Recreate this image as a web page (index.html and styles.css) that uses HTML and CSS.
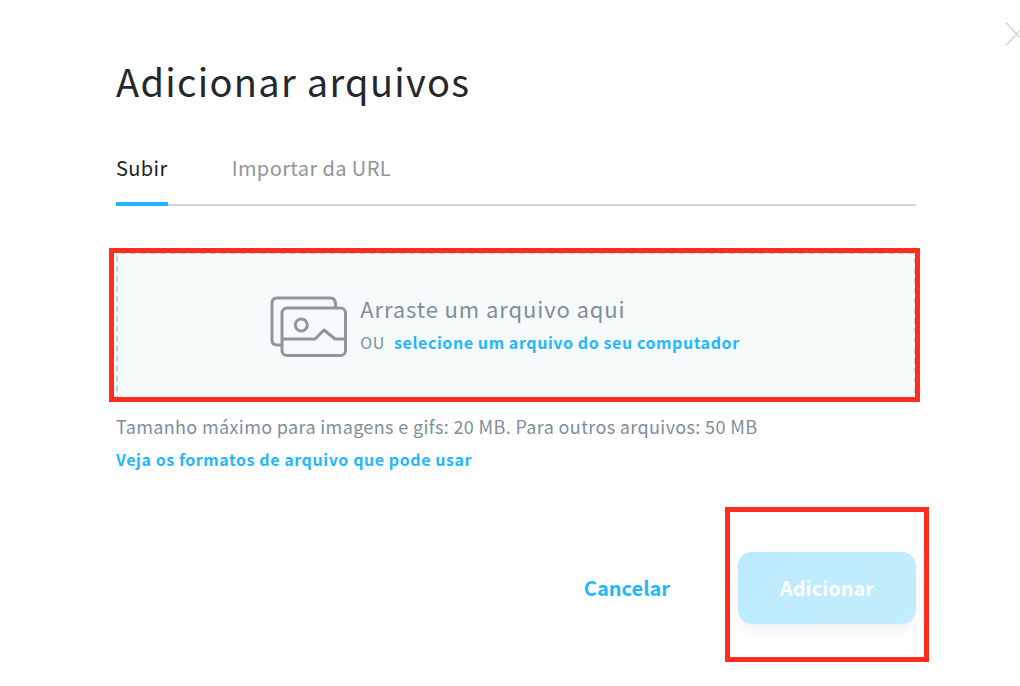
FILE: index.html
```html
<!DOCTYPE html>
<html lang="pt">
<head>
    <meta charset="UTF-8">
    <meta name="viewport" content="width=device-width, initial-scale=1.0">
    <title>Adicionar arquivos</title>
    <link rel="stylesheet" href="styles.css">
</head>

<body>
    <div class="modal">
        <svg class="close-icon" width="15" height="24" viewBox="0 0 15 24">
            <path d="M1 0.500 L11.500 12 L1 23.500 M11.500 12 L15 8.500 M11.500 12 L15 15.500" fill="none" stroke="#d4d4d4" stroke-width="1.300"/>
        </svg>

        <h1>Adicionar arquivos</h1>

        <div class="tabs">
            <a class="tab active">Subir</a>
            <a class="tab">Importar da URL</a>
        </div>

        <div class="dropzone">
            <svg class="drop-icon" width="78" height="62" viewBox="0 0 78 62">
                <g fill="none" stroke="#8e969d" stroke-width="3" stroke-linejoin="round">
                    <path d="M12 49 H7 Q2 49 2 44 V7 Q2 2 7 2 H60 Q65.500 2 65.500 8 V12"/>
                    <rect x="12" y="12" width="63.500" height="47.500" rx="5"/>
                    <circle cx="31.300" cy="29" r="6"/>
                    <path d="M12 43 H45 L54 34 L65 43 H75.500"/>
                </g>
            </svg>
            <div class="drop-text">
                <div class="drop-title">Arraste um arquivo aqui</div>
                <div class="drop-sub">OU <a class="link">selecione um arquivo do seu computador</a></div>
            </div>
        </div>

        <p class="hint">Tamanho máximo para imagens e gifs: 20 MB. Para outros arquivos: 50 MB</p>
        <a class="link formats">Veja os formatos de arquivo que pode usar</a>

        <div class="actions">
            <a class="link cancel">Cancelar</a>
            <button class="add-button" disabled>Adicionar</button>
        </div>
    </div>

    <div class="highlight highlight-drop"></div>
    <div class="highlight highlight-button"></div>
</body>
</html>
```

FILE: styles.css
```css
html, body {
    height: 100%;
}

body {
    margin: 0;
    background-color: #fff;
    font-family: "Noto Sans CJK SC", "Noto Sans", sans-serif;
    color: #24282d;
    overflow: hidden;
}

.modal {
    padding: 0 104px 0 116px;
}

.close-icon {
    position: absolute;
    top: 22px;
    right: 0;
}

h1 {
    margin: 0;
    padding-top: 54px;
    font-size: 38px;
    line-height: 54px;
    font-weight: 400;
    letter-spacing: 1.3px;
}

.tabs {
    display: flex;
    gap: 64px;
    margin-top: 45px;
    border-bottom: 2px solid #d2d4d6;
    height: 51px;
}

.tab {
    font-size: 20px;
    line-height: 30px;
    letter-spacing: 0.4px;
    color: #8d959d;
}

.tab.active {
    color: #1b1f24;
    border-bottom: 4px solid #1fb8ff;
    height: 49px;
}

.dropzone {
    display: flex;
    justify-content: center;
    align-items: center;
    gap: 12px;
    margin-top: 46px;
    height: 150px;
    box-sizing: border-box;
    background-color: #f7fafb;
    border: 2px dashed #cfcfcf;
    border-radius: 4px;
    padding-right: 22px;
}

.drop-text {
    padding-bottom: 8px;
}

.drop-title {
    font-size: 22px;
    line-height: 32px;
    letter-spacing: 0.9px;
    color: #7c8e9e;
}

.drop-sub {
    font-size: 16px;
    line-height: 24px;
    color: #7c8e9e;
    letter-spacing: 0.58px;
    margin-top: 6px;
}

.drop-sub .link {
    margin-left: 5px;
}

.link {
    color: #1fb8ff;
    font-weight: 700;
    cursor: pointer;
}

.hint {
    margin: 11px 0 0;
    font-size: 18px;
    line-height: 26px;
    letter-spacing: 0.36px;
    color: #7c8e9e;
}

.formats {
    display: block;
    margin-top: 7px;
    font-size: 16px;
    line-height: 26px;
    letter-spacing: 0.57px;
}

.actions {
    display: flex;
    justify-content: flex-end;
    align-items: center;
    gap: 68px;
    margin-top: 80px;
}

.cancel {
    font-size: 20px;
    padding-bottom: 2px;
}

.add-button {
    width: 178px;
    height: 72px;
    border: none;
    border-radius: 14px;
    padding: 0 0 2px;
    background-image: linear-gradient(135deg, #bceafe, #c3eeff);
    color: #fff;
    font-family: inherit;
    font-size: 20px;
    font-weight: 700;
    box-shadow: 0 8px 16px rgba(0, 0, 0, 0.05);
}

.highlight {
    position: absolute;
    border: 5px solid #ff2c20;
    box-sizing: border-box;
}

.highlight-drop {
    left: 109px;
    top: 248px;
    width: 811px;
    height: 154px;
}

.highlight-button {
    left: 725px;
    top: 507px;
    width: 204px;
    height: 155px;
}
```
